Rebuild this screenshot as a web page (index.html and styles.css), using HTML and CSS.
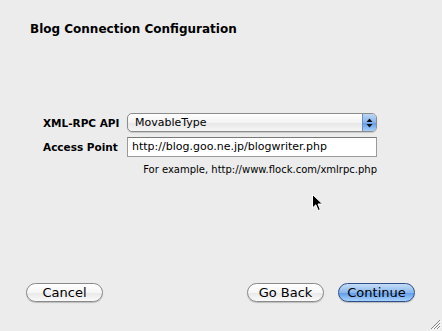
FILE: index.html
```html
<!DOCTYPE html>
<html lang="en">
<head>
    <meta charset="UTF-8">
    <title>Blog Connection Configuration</title>
    <link rel="stylesheet" href="styles.css">
</head>
<body>
    <div class="window">
        <h1 class="title">Blog Connection Configuration</h1>

        <section class="form">
            <label class="label">XML-RPC API</label>
            <div class="popup">
                <span class="popup-value">MovableType</span>
                <span class="stepper">
                    <svg width="7" height="10" viewBox="0 0 7 10">
                        <path d="M3.5 0.5 L6.5 4 L0.5 4 Z" fill="#111"/>
                        <path d="M3.5 9.5 L6.5 6 L0.5 6 Z" fill="#111"/>
                    </svg>
                </span>
            </div>

            <label class="label">Access Point</label>
            <div class="field">http://blog.goo.ne.jp/blogwriter.php</div>

            <p class="hint">For example, http://www.flock.com/xmlrpc.php</p>
        </section>

        <footer class="buttons">
            <button class="btn">Cancel</button>
            <div class="right">
                <button class="btn">Go Back</button>
                <button class="btn primary">Continue</button>
            </div>
        </footer>

        <svg class="cursor" width="14" height="20" viewBox="0 0 14 20">
            <path d="M1.5 1.5 L1.5 15 L4.8 11.8 L7.2 17.5 L9.3 16.6 L7 11 L11.5 11 Z" fill="#000" stroke="#fff" stroke-width="1"/>
        </svg>

        <svg class="grip" width="11" height="11" viewBox="0 0 11 11">
            <path d="M10 1 L1 10 M10 4 L4 10 M10 7 L7 10" stroke="#888" stroke-width="1"/>
            <path d="M11 2 L2 11 M11 5 L5 11 M11 8 L8 11" stroke="#fff" stroke-width="1"/>
        </svg>
    </div>
</body>
</html>
```

FILE: styles.css
```css
* {
    box-sizing: border-box;
    margin: 0;
    padding: 0;
}

body {
    font-family: 'DejaVu Sans', 'Lucida Grande', sans-serif;
    color: #000;
    background-color: #ececec;
}

.window {
    position: relative;
    width: 442px;
    height: 331px;
    display: flex;
    flex-direction: column;
    background-color: #ececec;
}

.title {
    font-size: 12px;
    font-weight: bold;
    line-height: 16px;
    padding: 21px 0 0 30px;
}

.form {
    display: grid;
    grid-template-columns: 84px 250px;
    row-gap: 5px;
    margin: 76px 0 0 43px;
    align-items: center;
}

.label {
    font-size: 10.5px;
    font-weight: bold;
}

.popup {
    position: relative;
    height: 19px;
    border: 1px solid #8c8c8c;
    border-radius: 5px;
    background: linear-gradient(#ffffff, #f3f3f3 50%, #e6e6e6 51%, #f6f6f6);
    box-shadow: 0 1px 1px rgba(0, 0, 0, 0.15);
    display: flex;
    align-items: center;
    overflow: hidden;
}

.popup-value {
    flex: 1;
    font-size: 11px;
    padding-left: 7px;
}

.stepper {
    width: 14px;
    height: 100%;
    display: flex;
    align-items: center;
    justify-content: center;
    border-left: 1px solid #6b8fc0;
    background: linear-gradient(#bcd6f4, #88b4ec 50%, #5f9ae6 51%, #a6d0fa);
}

.field {
    height: 20px;
    border: 1px solid #9a9a9a;
    border-top-color: #7a7a7a;
    background-color: #fff;
    font-size: 11px;
    line-height: 18px;
    padding-left: 4px;
}

.hint {
    grid-column: 1 / 3;
    text-align: right;
    font-size: 10px;
    line-height: 14px;
    margin-top: 1px;
}

.buttons {
    margin-top: auto;
    display: flex;
    justify-content: space-between;
    padding: 0 27px 29px 26px;
}

.right {
    display: flex;
    gap: 14px;
}

.btn {
    width: 77px;
    height: 19px;
    border: 1px solid #8a8a8a;
    border-radius: 10px;
    font-family: 'DejaVu Sans', 'Lucida Grande', sans-serif;
    font-size: 13px;
    line-height: 16px;
    color: #000;
    background: linear-gradient(#ffffff, #f6f6f6 50%, #e8e8e8 51%, #fafafa);
    box-shadow: 0 1px 1px rgba(0, 0, 0, 0.2);
}

.btn.primary {
    border-color: #2f4f8a;
    background: linear-gradient(#c6ddf6, #8ab8ef 50%, #5d9ae8 51%, #a8d2fc);
}

.cursor {
    position: absolute;
    left: 311px;
    top: 193px;
}

.grip {
    position: absolute;
    right: 1px;
    bottom: 1px;
}
```
